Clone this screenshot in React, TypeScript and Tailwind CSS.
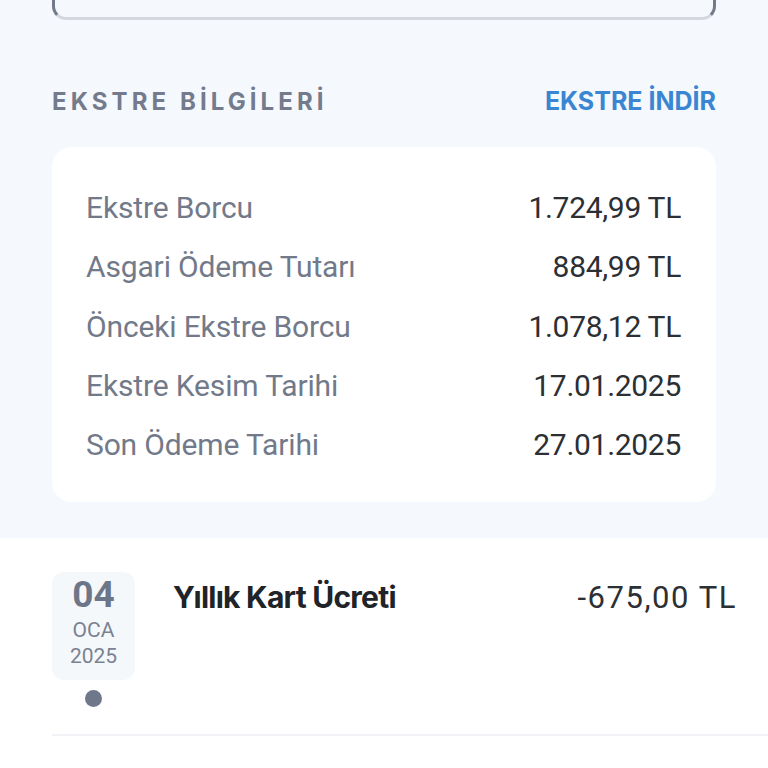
const rows = [
  { label: 'Ekstre Borcu', value: '1.724,99 TL' },
  { label: 'Asgari Ödeme Tutarı', value: '884,99 TL' },
  { label: 'Önceki Ekstre Borcu', value: '1.078,12 TL' },
  { label: 'Ekstre Kesim Tarihi', value: '17.01.2025' },
  { label: 'Son Ödeme Tarihi', value: '27.01.2025' },
];

export default function App() {
  return (
    <div className="w-[768px] h-[768px] overflow-hidden bg-[#f5f9fd] flex flex-col" style={{ fontFamily: 'Roboto, "Noto Sans", sans-serif' }}>
      <div className="px-[52px]">
        <div className="h-[20px] rounded-b-[14px] border-x-[3px] border-b-[3px] border-x-[#737a88] border-b-[#d4d8de] bg-[#f5f9fd]" />
      </div>

      <div className="flex items-center justify-between px-[52px] mt-[68px] h-[28px]" style={{ fontFamily: 'Inter, sans-serif' }}>
        <span className="text-[24px] font-bold tracking-[0.17em] text-[#737b8c]">EKSTRE BİLGİLERİ</span>
        <span className="text-[25px] font-bold tracking-[0] text-[#3a86d2]">EKSTRE İNDİR</span>
      </div>

      <div className="mx-[52px] mt-[31px] bg-white rounded-[20px] pt-[31px] pb-[28px] pl-[34px] pr-[35px]">
        {rows.map((r) => (
          <div key={r.label} className="flex items-center justify-between h-[59.3px]">
            <span className="text-[30px] text-[#727a8a] tracking-[-0.005em]">{r.label}</span>
            <span className="text-[30px] text-[#2c2f33] tracking-[-0.01em]">{r.value}</span>
          </div>
        ))}
      </div>

      <div className="mt-[36px] flex-1 bg-white">
        <div className="ml-[52px] pt-[34px] border-b-2 border-[#f1f3f6] h-[198px] flex">
          <div className="flex flex-col items-center w-[83px]">
            <div className="w-[83px] h-[108px] rounded-[12px] bg-[#f5f8fb] flex flex-col items-center pt-[3px]">
              <span className="text-[37px] font-bold leading-[40px] text-[#6d7688]">04</span>
              <span className="text-[21px] leading-[26px] text-[#7a8292] mt-[2px]">OCA</span>
              <span className="text-[21px] leading-[26px] text-[#7a8292]">2025</span>
            </div>
            <div className="w-[17px] h-[17px] rounded-full bg-[#6f788b] mt-[10px]" />
          </div>
          <div className="flex-1 flex justify-between pl-[38px] pr-[31px] pt-[7px]">
            <span className="text-[30px] font-bold tracking-[-0.025em] text-[#202327] leading-[36px]" style={{ fontFamily: 'Inter, sans-serif' }}>Yıllık Kart Ücreti</span>
            <span className="text-[31px] text-[#2c2f33] tracking-[0.05em] leading-[36px] mt-[1px]">-675,00 TL</span>
          </div>
        </div>
      </div>
    </div>
  );
}
